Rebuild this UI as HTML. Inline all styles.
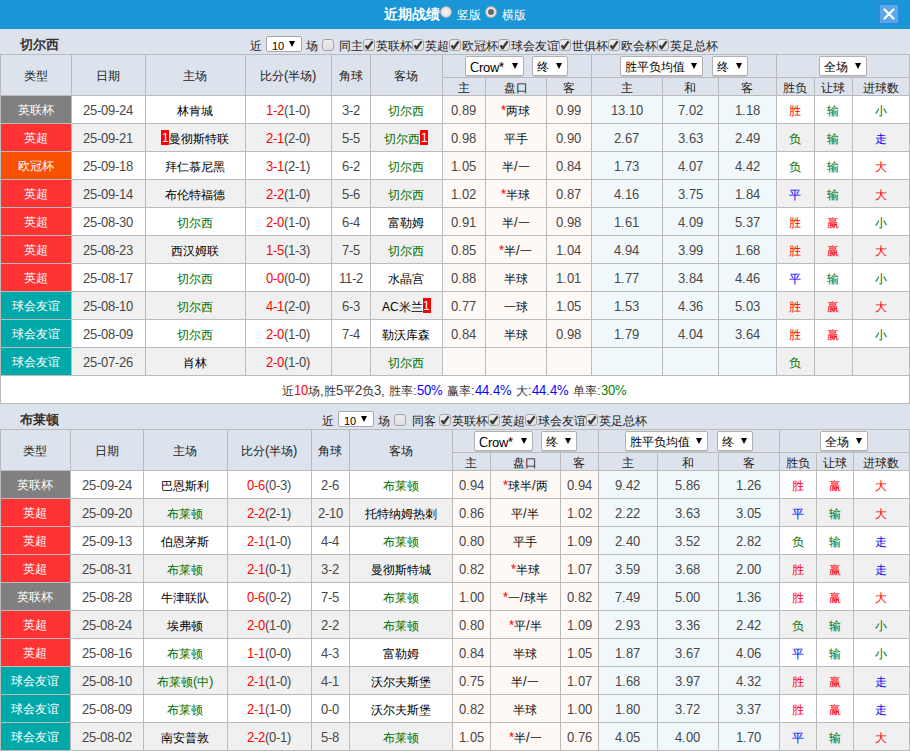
<!DOCTYPE html><html><head><meta charset="utf-8"><style>
@font-face{font-family:"LS";src:local("Liberation Sans");unicode-range:U+0000-024F;size-adjust:106%}
*{margin:0;padding:0;box-sizing:border-box}
html,body{width:910px;height:751px;overflow:hidden;background:#fff}
body{position:relative;font-family:"LS","Liberation Sans",sans-serif;font-size:12px;color:#333}
.c,.b{position:absolute;text-align:center;white-space:nowrap;overflow:hidden}
.c{padding-right:1px}
.title{position:absolute;left:0;top:0;width:910px;height:29px;background:#1a96d6}
.tname{position:absolute;height:25px;line-height:31px;font-weight:bold;font-size:13px;color:#333}
.tt{position:absolute;height:25px;line-height:34px;white-space:nowrap;color:#222}
.nsel{position:absolute;width:36px;height:16px;background:#fff;border:1px solid #a8a8a8;border-radius:2px;line-height:17px;text-align:left;padding-left:5px;color:#000}
.nsel span{font-size:10.5px}
.ar2{position:absolute;left:22px;top:4px;width:0;height:0;border-left:3px solid transparent;border-right:3px solid transparent;border-top:6px solid #000}
.cb{position:absolute;width:12px;height:12px;border:1px solid #a4a4a4;border-radius:3px;background:linear-gradient(#ececec,#e0e0e0)}
.cb svg{left:-1px!important;top:-1px!important}
.lg{}
.sel{position:absolute;height:20px;background:#fff;border:1px solid #b0b0b0;border-radius:2px;box-shadow:0 1px 0 #c8c8c8;text-align:left;padding-left:4px;line-height:22px;color:#000;white-space:nowrap}
.sel .ar{position:absolute;right:5px;top:6px;width:0;height:0;border-left:3px solid transparent;border-right:3px solid transparent;border-top:6px solid #000}
.rc{display:inline-block;font-style:normal;background:#f00;color:#fff;width:8px;height:15px;line-height:15px;font-size:11px;font-weight:normal;text-align:center;vertical-align:middle;margin-top:-2px;position:relative;top:-1px}
</style></head><body><div class="title"></div>
<div style="position:absolute;left:384px;top:0;height:29px;line-height:29px;color:#fff;font-weight:bold;font-size:14px;white-space:nowrap">近期战绩</div>
<div style="position:absolute;left:440px;top:6px;width:12px;height:12px;border-radius:50%;background:radial-gradient(#f4f4f4,#dcdcdc);border:1px solid #a8a8a8"></div>
<div style="position:absolute;left:457px;top:0;height:29px;line-height:29px;color:#fff;font-size:12px">竖版</div>
<div style="position:absolute;left:485px;top:6px;width:12px;height:12px;border-radius:50%;background:#e8e8e8;border:1px solid #a8a8a8"><div style="position:absolute;left:2px;top:2px;width:6px;height:6px;border-radius:50%;background:#666"></div></div>
<div style="position:absolute;left:502px;top:0;height:29px;line-height:29px;color:#fff;font-size:12px">横版</div>
<div style="position:absolute;left:878px;top:3px;width:22px;height:22px;background:#5aa6e8;border:2px solid #2a8ce0"><svg width="18" height="18" style="position:absolute;left:0;top:0"><path d="M4.5 4.5L13.5 13.5M13.5 4.5L4.5 13.5" stroke="#fff" stroke-width="2.2" stroke-linecap="round"/></svg></div>
<div class="b" style="left:0px;top:29px;width:910px;height:25px;line-height:25px;background:#dde3ec"></div>
<div class="tname" style="left:20px;top:29px">切尔西</div>
<div class="tt" style="left:250px;top:29px">近</div>
<div class="nsel" style="left:266px;top:36px"><span>10</span><i class="ar2"></i></div>
<div class="tt" style="left:306px;top:29px">场</div>
<div class="cb" style="left:322px;top:39px"></div>
<div class="tt" style="left:339px;top:29px">同主</div>
<div class="cb" style="left:363px;top:39px"><svg width="12" height="12" style="position:absolute;left:0;top:0"><path d="M2.6 6.4L4.6 9.2L9.6 2.4" stroke="#3a3a3a" stroke-width="2.4" fill="none" stroke-linejoin="round"/></svg></div>
<div class="tt" style="left:376px;top:29px">英联杯</div>
<div class="cb" style="left:412px;top:39px"><svg width="12" height="12" style="position:absolute;left:0;top:0"><path d="M2.6 6.4L4.6 9.2L9.6 2.4" stroke="#3a3a3a" stroke-width="2.4" fill="none" stroke-linejoin="round"/></svg></div>
<div class="tt" style="left:425px;top:29px">英超</div>
<div class="cb" style="left:449px;top:39px"><svg width="12" height="12" style="position:absolute;left:0;top:0"><path d="M2.6 6.4L4.6 9.2L9.6 2.4" stroke="#3a3a3a" stroke-width="2.4" fill="none" stroke-linejoin="round"/></svg></div>
<div class="tt" style="left:462px;top:29px">欧冠杯</div>
<div class="cb" style="left:498px;top:39px"><svg width="12" height="12" style="position:absolute;left:0;top:0"><path d="M2.6 6.4L4.6 9.2L9.6 2.4" stroke="#3a3a3a" stroke-width="2.4" fill="none" stroke-linejoin="round"/></svg></div>
<div class="tt" style="left:511px;top:29px">球会友谊</div>
<div class="cb" style="left:559px;top:39px"><svg width="12" height="12" style="position:absolute;left:0;top:0"><path d="M2.6 6.4L4.6 9.2L9.6 2.4" stroke="#3a3a3a" stroke-width="2.4" fill="none" stroke-linejoin="round"/></svg></div>
<div class="tt" style="left:572px;top:29px">世俱杯</div>
<div class="cb" style="left:608px;top:39px"><svg width="12" height="12" style="position:absolute;left:0;top:0"><path d="M2.6 6.4L4.6 9.2L9.6 2.4" stroke="#3a3a3a" stroke-width="2.4" fill="none" stroke-linejoin="round"/></svg></div>
<div class="tt" style="left:621px;top:29px">欧会杯</div>
<div class="cb" style="left:657px;top:39px"><svg width="12" height="12" style="position:absolute;left:0;top:0"><path d="M2.6 6.4L4.6 9.2L9.6 2.4" stroke="#3a3a3a" stroke-width="2.4" fill="none" stroke-linejoin="round"/></svg></div>
<div class="tt" style="left:670px;top:29px">英足总杯</div>
<div class="b" style="left:0px;top:54px;width:910px;height:350px;line-height:350px;background:#bbbbbb"></div>
<div class="c" style="left:1px;top:55px;width:70px;height:40px;line-height:42px;background:#dde3ec;color:#222">类型</div>
<div class="c" style="left:72px;top:55px;width:73px;height:40px;line-height:42px;background:#dde3ec;color:#222">日期</div>
<div class="c" style="left:146px;top:55px;width:99px;height:40px;line-height:42px;background:#dde3ec;color:#222">主场</div>
<div class="c" style="left:246px;top:55px;width:85px;height:40px;line-height:42px;background:#dde3ec;color:#222">比分(半场)</div>
<div class="c" style="left:332px;top:55px;width:38px;height:40px;line-height:42px;background:#dde3ec;color:#222">角球</div>
<div class="c" style="left:371px;top:55px;width:71px;height:40px;line-height:42px;background:#dde3ec;color:#222">客场</div>
<div class="c" style="left:443px;top:55px;width:148px;height:22px;line-height:22px;background:#dde3ec"></div>
<div class="c" style="left:592px;top:55px;width:184px;height:22px;line-height:22px;background:#dde3ec"></div>
<div class="c" style="left:777px;top:55px;width:132px;height:22px;line-height:22px;background:#dde3ec"></div>
<div class="c" style="left:443px;top:78px;width:42px;height:17px;line-height:20px;background:#dde3ec;color:#222">主</div>
<div class="c" style="left:486px;top:78px;width:60px;height:17px;line-height:20px;background:#dde3ec;color:#222">盘口</div>
<div class="c" style="left:547px;top:78px;width:44px;height:17px;line-height:20px;background:#dde3ec;color:#222">客</div>
<div class="c" style="left:592px;top:78px;width:70px;height:17px;line-height:20px;background:#dde3ec;color:#222">主</div>
<div class="c" style="left:663px;top:78px;width:55px;height:17px;line-height:20px;background:#dde3ec;color:#222">和</div>
<div class="c" style="left:719px;top:78px;width:57px;height:17px;line-height:20px;background:#dde3ec;color:#222">客</div>
<div class="c" style="left:777px;top:78px;width:37px;height:17px;line-height:20px;background:#dde3ec;color:#222">胜负</div>
<div class="c" style="left:815px;top:78px;width:37px;height:17px;line-height:20px;background:#dde3ec;color:#222">让球</div>
<div class="c" style="left:853px;top:78px;width:56px;height:17px;line-height:20px;background:#dde3ec;color:#222">进球数</div>
<div class="sel" style="left:465px;top:56px;width:59px;"><span class="st" style="font-size:12.5px">Crow*</span><span class="ar"></span></div>
<div class="sel" style="left:532px;top:56px;width:36px;"><span class="st" style="line-height:20px;display:inline-block;vertical-align:top">终</span><span class="ar"></span></div>
<div class="sel" style="left:620px;top:56px;width:83px;"><span class="st" style="line-height:20px;display:inline-block;vertical-align:top">胜平负均值</span><span class="ar"></span></div>
<div class="sel" style="left:712px;top:56px;width:36px;"><span class="st" style="line-height:20px;display:inline-block;vertical-align:top">终</span><span class="ar"></span></div>
<div class="sel" style="left:819px;top:56px;width:48px;"><span class="st" style="line-height:20px;display:inline-block;vertical-align:top">全场</span><span class="ar"></span></div>
<div class="c" style="left:1px;top:96px;width:70px;height:27px;line-height:27px;background:#808080;color:#fff">英联杯</div>
<div class="c" style="left:72px;top:96px;width:73px;height:27px;line-height:29px;background:#fff;color:#474747">25-09-24</div>
<div class="c" style="left:146px;top:96px;width:99px;height:27px;line-height:29px;background:#fff"><span style="color:#000">林肯城</span></div>
<div class="c" style="left:246px;top:96px;width:85px;height:27px;line-height:29px;background:#fff"><span style="color:#ff0000">1-2</span><span style="color:#474747">(1-0)</span></div>
<div class="c" style="left:332px;top:96px;width:38px;height:27px;line-height:29px;background:#fff;color:#474747">3-2</div>
<div class="c" style="left:371px;top:96px;width:71px;height:27px;line-height:29px;background:#fff"><span style="color:#007000">切尔西</span></div>
<div class="c" style="left:443px;top:96px;width:42px;height:27px;line-height:29px;background:#fff9f5;color:#474747">0.89</div>
<div class="c" style="left:486px;top:96px;width:60px;height:27px;line-height:29px;background:#fff9f5;color:#111"><span style="color:#ff0000">*</span>两球</div>
<div class="c" style="left:547px;top:96px;width:44px;height:27px;line-height:29px;background:#fff9f5;color:#474747">0.99</div>
<div class="c" style="left:592px;top:96px;width:70px;height:27px;line-height:29px;background:#f0f8fc;color:#474747">13.10</div>
<div class="c" style="left:663px;top:96px;width:55px;height:27px;line-height:29px;background:#f0f8fc;color:#474747">7.02</div>
<div class="c" style="left:719px;top:96px;width:57px;height:27px;line-height:29px;background:#f0f8fc;color:#474747">1.18</div>
<div class="c" style="left:777px;top:96px;width:37px;height:27px;line-height:29px;background:#fff;color:#ff0000">胜</div>
<div class="c" style="left:815px;top:96px;width:37px;height:27px;line-height:29px;background:#fff;color:#007000">输</div>
<div class="c" style="left:853px;top:96px;width:56px;height:27px;line-height:29px;background:#fff;color:#007000">小</div>
<div class="c" style="left:1px;top:124px;width:70px;height:27px;line-height:27px;background:#ff3333;color:#fff">英超</div>
<div class="c" style="left:72px;top:124px;width:73px;height:27px;line-height:29px;background:#f0f0f0;color:#474747">25-09-21</div>
<div class="c" style="left:146px;top:124px;width:99px;height:27px;line-height:29px;background:#f0f0f0"><span style="color:#000"><i class="rc">1</i>曼彻斯特联</span></div>
<div class="c" style="left:246px;top:124px;width:85px;height:27px;line-height:29px;background:#f0f0f0"><span style="color:#ff0000">2-1</span><span style="color:#474747">(2-0)</span></div>
<div class="c" style="left:332px;top:124px;width:38px;height:27px;line-height:29px;background:#f0f0f0;color:#474747">5-5</div>
<div class="c" style="left:371px;top:124px;width:71px;height:27px;line-height:29px;background:#f0f0f0"><span style="color:#007000">切尔西<i class="rc">1</i></span></div>
<div class="c" style="left:443px;top:124px;width:42px;height:27px;line-height:29px;background:#fff9f5;color:#474747">0.98</div>
<div class="c" style="left:486px;top:124px;width:60px;height:27px;line-height:29px;background:#fff9f5;color:#111">平手</div>
<div class="c" style="left:547px;top:124px;width:44px;height:27px;line-height:29px;background:#fff9f5;color:#474747">0.90</div>
<div class="c" style="left:592px;top:124px;width:70px;height:27px;line-height:29px;background:#f0f8fc;color:#474747">2.67</div>
<div class="c" style="left:663px;top:124px;width:55px;height:27px;line-height:29px;background:#f0f8fc;color:#474747">3.63</div>
<div class="c" style="left:719px;top:124px;width:57px;height:27px;line-height:29px;background:#f0f8fc;color:#474747">2.49</div>
<div class="c" style="left:777px;top:124px;width:37px;height:27px;line-height:29px;background:#f0f0f0;color:#007000">负</div>
<div class="c" style="left:815px;top:124px;width:37px;height:27px;line-height:29px;background:#f0f0f0;color:#007000">输</div>
<div class="c" style="left:853px;top:124px;width:56px;height:27px;line-height:29px;background:#f0f0f0;color:#0000ff">走</div>
<div class="c" style="left:1px;top:152px;width:70px;height:27px;line-height:27px;background:#f75000;color:#fff">欧冠杯</div>
<div class="c" style="left:72px;top:152px;width:73px;height:27px;line-height:29px;background:#fff;color:#474747">25-09-18</div>
<div class="c" style="left:146px;top:152px;width:99px;height:27px;line-height:29px;background:#fff"><span style="color:#000">拜仁慕尼黑</span></div>
<div class="c" style="left:246px;top:152px;width:85px;height:27px;line-height:29px;background:#fff"><span style="color:#ff0000">3-1</span><span style="color:#474747">(2-1)</span></div>
<div class="c" style="left:332px;top:152px;width:38px;height:27px;line-height:29px;background:#fff;color:#474747">6-2</div>
<div class="c" style="left:371px;top:152px;width:71px;height:27px;line-height:29px;background:#fff"><span style="color:#007000">切尔西</span></div>
<div class="c" style="left:443px;top:152px;width:42px;height:27px;line-height:29px;background:#fff9f5;color:#474747">1.05</div>
<div class="c" style="left:486px;top:152px;width:60px;height:27px;line-height:29px;background:#fff9f5;color:#111">半/一</div>
<div class="c" style="left:547px;top:152px;width:44px;height:27px;line-height:29px;background:#fff9f5;color:#474747">0.84</div>
<div class="c" style="left:592px;top:152px;width:70px;height:27px;line-height:29px;background:#f0f8fc;color:#474747">1.73</div>
<div class="c" style="left:663px;top:152px;width:55px;height:27px;line-height:29px;background:#f0f8fc;color:#474747">4.07</div>
<div class="c" style="left:719px;top:152px;width:57px;height:27px;line-height:29px;background:#f0f8fc;color:#474747">4.42</div>
<div class="c" style="left:777px;top:152px;width:37px;height:27px;line-height:29px;background:#fff;color:#007000">负</div>
<div class="c" style="left:815px;top:152px;width:37px;height:27px;line-height:29px;background:#fff;color:#007000">输</div>
<div class="c" style="left:853px;top:152px;width:56px;height:27px;line-height:29px;background:#fff;color:#ff0000">大</div>
<div class="c" style="left:1px;top:180px;width:70px;height:27px;line-height:27px;background:#ff3333;color:#fff">英超</div>
<div class="c" style="left:72px;top:180px;width:73px;height:27px;line-height:29px;background:#f0f0f0;color:#474747">25-09-14</div>
<div class="c" style="left:146px;top:180px;width:99px;height:27px;line-height:29px;background:#f0f0f0"><span style="color:#000">布伦特福德</span></div>
<div class="c" style="left:246px;top:180px;width:85px;height:27px;line-height:29px;background:#f0f0f0"><span style="color:#ff0000">2-2</span><span style="color:#474747">(1-0)</span></div>
<div class="c" style="left:332px;top:180px;width:38px;height:27px;line-height:29px;background:#f0f0f0;color:#474747">5-6</div>
<div class="c" style="left:371px;top:180px;width:71px;height:27px;line-height:29px;background:#f0f0f0"><span style="color:#007000">切尔西</span></div>
<div class="c" style="left:443px;top:180px;width:42px;height:27px;line-height:29px;background:#fff9f5;color:#474747">1.02</div>
<div class="c" style="left:486px;top:180px;width:60px;height:27px;line-height:29px;background:#fff9f5;color:#111"><span style="color:#ff0000">*</span>半球</div>
<div class="c" style="left:547px;top:180px;width:44px;height:27px;line-height:29px;background:#fff9f5;color:#474747">0.87</div>
<div class="c" style="left:592px;top:180px;width:70px;height:27px;line-height:29px;background:#f0f8fc;color:#474747">4.16</div>
<div class="c" style="left:663px;top:180px;width:55px;height:27px;line-height:29px;background:#f0f8fc;color:#474747">3.75</div>
<div class="c" style="left:719px;top:180px;width:57px;height:27px;line-height:29px;background:#f0f8fc;color:#474747">1.84</div>
<div class="c" style="left:777px;top:180px;width:37px;height:27px;line-height:29px;background:#f0f0f0;color:#0000ff">平</div>
<div class="c" style="left:815px;top:180px;width:37px;height:27px;line-height:29px;background:#f0f0f0;color:#007000">输</div>
<div class="c" style="left:853px;top:180px;width:56px;height:27px;line-height:29px;background:#f0f0f0;color:#ff0000">大</div>
<div class="c" style="left:1px;top:208px;width:70px;height:27px;line-height:27px;background:#ff3333;color:#fff">英超</div>
<div class="c" style="left:72px;top:208px;width:73px;height:27px;line-height:29px;background:#fff;color:#474747">25-08-30</div>
<div class="c" style="left:146px;top:208px;width:99px;height:27px;line-height:29px;background:#fff"><span style="color:#007000">切尔西</span></div>
<div class="c" style="left:246px;top:208px;width:85px;height:27px;line-height:29px;background:#fff"><span style="color:#ff0000">2-0</span><span style="color:#474747">(1-0)</span></div>
<div class="c" style="left:332px;top:208px;width:38px;height:27px;line-height:29px;background:#fff;color:#474747">6-4</div>
<div class="c" style="left:371px;top:208px;width:71px;height:27px;line-height:29px;background:#fff"><span style="color:#000">富勒姆</span></div>
<div class="c" style="left:443px;top:208px;width:42px;height:27px;line-height:29px;background:#fff9f5;color:#474747">0.91</div>
<div class="c" style="left:486px;top:208px;width:60px;height:27px;line-height:29px;background:#fff9f5;color:#111">半/一</div>
<div class="c" style="left:547px;top:208px;width:44px;height:27px;line-height:29px;background:#fff9f5;color:#474747">0.98</div>
<div class="c" style="left:592px;top:208px;width:70px;height:27px;line-height:29px;background:#f0f8fc;color:#474747">1.61</div>
<div class="c" style="left:663px;top:208px;width:55px;height:27px;line-height:29px;background:#f0f8fc;color:#474747">4.09</div>
<div class="c" style="left:719px;top:208px;width:57px;height:27px;line-height:29px;background:#f0f8fc;color:#474747">5.37</div>
<div class="c" style="left:777px;top:208px;width:37px;height:27px;line-height:29px;background:#fff;color:#ff0000">胜</div>
<div class="c" style="left:815px;top:208px;width:37px;height:27px;line-height:29px;background:#fff;color:#ff0000">赢</div>
<div class="c" style="left:853px;top:208px;width:56px;height:27px;line-height:29px;background:#fff;color:#007000">小</div>
<div class="c" style="left:1px;top:236px;width:70px;height:27px;line-height:27px;background:#ff3333;color:#fff">英超</div>
<div class="c" style="left:72px;top:236px;width:73px;height:27px;line-height:29px;background:#f0f0f0;color:#474747">25-08-23</div>
<div class="c" style="left:146px;top:236px;width:99px;height:27px;line-height:29px;background:#f0f0f0"><span style="color:#000">西汉姆联</span></div>
<div class="c" style="left:246px;top:236px;width:85px;height:27px;line-height:29px;background:#f0f0f0"><span style="color:#ff0000">1-5</span><span style="color:#474747">(1-3)</span></div>
<div class="c" style="left:332px;top:236px;width:38px;height:27px;line-height:29px;background:#f0f0f0;color:#474747">7-5</div>
<div class="c" style="left:371px;top:236px;width:71px;height:27px;line-height:29px;background:#f0f0f0"><span style="color:#007000">切尔西</span></div>
<div class="c" style="left:443px;top:236px;width:42px;height:27px;line-height:29px;background:#fff9f5;color:#474747">0.85</div>
<div class="c" style="left:486px;top:236px;width:60px;height:27px;line-height:29px;background:#fff9f5;color:#111"><span style="color:#ff0000">*</span>半/一</div>
<div class="c" style="left:547px;top:236px;width:44px;height:27px;line-height:29px;background:#fff9f5;color:#474747">1.04</div>
<div class="c" style="left:592px;top:236px;width:70px;height:27px;line-height:29px;background:#f0f8fc;color:#474747">4.94</div>
<div class="c" style="left:663px;top:236px;width:55px;height:27px;line-height:29px;background:#f0f8fc;color:#474747">3.99</div>
<div class="c" style="left:719px;top:236px;width:57px;height:27px;line-height:29px;background:#f0f8fc;color:#474747">1.68</div>
<div class="c" style="left:777px;top:236px;width:37px;height:27px;line-height:29px;background:#f0f0f0;color:#ff0000">胜</div>
<div class="c" style="left:815px;top:236px;width:37px;height:27px;line-height:29px;background:#f0f0f0;color:#ff0000">赢</div>
<div class="c" style="left:853px;top:236px;width:56px;height:27px;line-height:29px;background:#f0f0f0;color:#ff0000">大</div>
<div class="c" style="left:1px;top:264px;width:70px;height:27px;line-height:27px;background:#ff3333;color:#fff">英超</div>
<div class="c" style="left:72px;top:264px;width:73px;height:27px;line-height:29px;background:#fff;color:#474747">25-08-17</div>
<div class="c" style="left:146px;top:264px;width:99px;height:27px;line-height:29px;background:#fff"><span style="color:#007000">切尔西</span></div>
<div class="c" style="left:246px;top:264px;width:85px;height:27px;line-height:29px;background:#fff"><span style="color:#ff0000">0-0</span><span style="color:#474747">(0-0)</span></div>
<div class="c" style="left:332px;top:264px;width:38px;height:27px;line-height:29px;background:#fff;color:#474747">11-2</div>
<div class="c" style="left:371px;top:264px;width:71px;height:27px;line-height:29px;background:#fff"><span style="color:#000">水晶宫</span></div>
<div class="c" style="left:443px;top:264px;width:42px;height:27px;line-height:29px;background:#fff9f5;color:#474747">0.88</div>
<div class="c" style="left:486px;top:264px;width:60px;height:27px;line-height:29px;background:#fff9f5;color:#111">半球</div>
<div class="c" style="left:547px;top:264px;width:44px;height:27px;line-height:29px;background:#fff9f5;color:#474747">1.01</div>
<div class="c" style="left:592px;top:264px;width:70px;height:27px;line-height:29px;background:#f0f8fc;color:#474747">1.77</div>
<div class="c" style="left:663px;top:264px;width:55px;height:27px;line-height:29px;background:#f0f8fc;color:#474747">3.84</div>
<div class="c" style="left:719px;top:264px;width:57px;height:27px;line-height:29px;background:#f0f8fc;color:#474747">4.46</div>
<div class="c" style="left:777px;top:264px;width:37px;height:27px;line-height:29px;background:#fff;color:#0000ff">平</div>
<div class="c" style="left:815px;top:264px;width:37px;height:27px;line-height:29px;background:#fff;color:#007000">输</div>
<div class="c" style="left:853px;top:264px;width:56px;height:27px;line-height:29px;background:#fff;color:#007000">小</div>
<div class="c" style="left:1px;top:292px;width:70px;height:27px;line-height:27px;background:#00a9a9;color:#fff">球会友谊</div>
<div class="c" style="left:72px;top:292px;width:73px;height:27px;line-height:29px;background:#f0f0f0;color:#474747">25-08-10</div>
<div class="c" style="left:146px;top:292px;width:99px;height:27px;line-height:29px;background:#f0f0f0"><span style="color:#007000">切尔西</span></div>
<div class="c" style="left:246px;top:292px;width:85px;height:27px;line-height:29px;background:#f0f0f0"><span style="color:#ff0000">4-1</span><span style="color:#474747">(2-0)</span></div>
<div class="c" style="left:332px;top:292px;width:38px;height:27px;line-height:29px;background:#f0f0f0;color:#474747">6-3</div>
<div class="c" style="left:371px;top:292px;width:71px;height:27px;line-height:29px;background:#f0f0f0"><span style="color:#000"><span style="font-size:11px">AC</span>米兰<i class="rc">1</i></span></div>
<div class="c" style="left:443px;top:292px;width:42px;height:27px;line-height:29px;background:#fff9f5;color:#474747">0.77</div>
<div class="c" style="left:486px;top:292px;width:60px;height:27px;line-height:29px;background:#fff9f5;color:#111">一球</div>
<div class="c" style="left:547px;top:292px;width:44px;height:27px;line-height:29px;background:#fff9f5;color:#474747">1.05</div>
<div class="c" style="left:592px;top:292px;width:70px;height:27px;line-height:29px;background:#f0f8fc;color:#474747">1.53</div>
<div class="c" style="left:663px;top:292px;width:55px;height:27px;line-height:29px;background:#f0f8fc;color:#474747">4.36</div>
<div class="c" style="left:719px;top:292px;width:57px;height:27px;line-height:29px;background:#f0f8fc;color:#474747">5.03</div>
<div class="c" style="left:777px;top:292px;width:37px;height:27px;line-height:29px;background:#f0f0f0;color:#ff0000">胜</div>
<div class="c" style="left:815px;top:292px;width:37px;height:27px;line-height:29px;background:#f0f0f0;color:#ff0000">赢</div>
<div class="c" style="left:853px;top:292px;width:56px;height:27px;line-height:29px;background:#f0f0f0;color:#ff0000">大</div>
<div class="c" style="left:1px;top:320px;width:70px;height:27px;line-height:27px;background:#00a9a9;color:#fff">球会友谊</div>
<div class="c" style="left:72px;top:320px;width:73px;height:27px;line-height:29px;background:#fff;color:#474747">25-08-09</div>
<div class="c" style="left:146px;top:320px;width:99px;height:27px;line-height:29px;background:#fff"><span style="color:#007000">切尔西</span></div>
<div class="c" style="left:246px;top:320px;width:85px;height:27px;line-height:29px;background:#fff"><span style="color:#ff0000">2-0</span><span style="color:#474747">(1-0)</span></div>
<div class="c" style="left:332px;top:320px;width:38px;height:27px;line-height:29px;background:#fff;color:#474747">7-4</div>
<div class="c" style="left:371px;top:320px;width:71px;height:27px;line-height:29px;background:#fff"><span style="color:#000">勒沃库森</span></div>
<div class="c" style="left:443px;top:320px;width:42px;height:27px;line-height:29px;background:#fff9f5;color:#474747">0.84</div>
<div class="c" style="left:486px;top:320px;width:60px;height:27px;line-height:29px;background:#fff9f5;color:#111">半球</div>
<div class="c" style="left:547px;top:320px;width:44px;height:27px;line-height:29px;background:#fff9f5;color:#474747">0.98</div>
<div class="c" style="left:592px;top:320px;width:70px;height:27px;line-height:29px;background:#f0f8fc;color:#474747">1.79</div>
<div class="c" style="left:663px;top:320px;width:55px;height:27px;line-height:29px;background:#f0f8fc;color:#474747">4.04</div>
<div class="c" style="left:719px;top:320px;width:57px;height:27px;line-height:29px;background:#f0f8fc;color:#474747">3.64</div>
<div class="c" style="left:777px;top:320px;width:37px;height:27px;line-height:29px;background:#fff;color:#ff0000">胜</div>
<div class="c" style="left:815px;top:320px;width:37px;height:27px;line-height:29px;background:#fff;color:#ff0000">赢</div>
<div class="c" style="left:853px;top:320px;width:56px;height:27px;line-height:29px;background:#fff;color:#007000">小</div>
<div class="c" style="left:1px;top:348px;width:70px;height:27px;line-height:27px;background:#00a9a9;color:#fff">球会友谊</div>
<div class="c" style="left:72px;top:348px;width:73px;height:27px;line-height:29px;background:#f0f0f0;color:#474747">25-07-26</div>
<div class="c" style="left:146px;top:348px;width:99px;height:27px;line-height:29px;background:#f0f0f0"><span style="color:#000">肖林</span></div>
<div class="c" style="left:246px;top:348px;width:85px;height:27px;line-height:29px;background:#f0f0f0"><span style="color:#ff0000">2-0</span><span style="color:#474747">(1-0)</span></div>
<div class="c" style="left:332px;top:348px;width:38px;height:27px;line-height:29px;background:#f0f0f0;color:#474747"></div>
<div class="c" style="left:371px;top:348px;width:71px;height:27px;line-height:29px;background:#f0f0f0"><span style="color:#007000">切尔西</span></div>
<div class="c" style="left:443px;top:348px;width:42px;height:27px;line-height:29px;background:#fff9f5;color:#474747"></div>
<div class="c" style="left:486px;top:348px;width:60px;height:27px;line-height:29px;background:#fff9f5;color:#111"></div>
<div class="c" style="left:547px;top:348px;width:44px;height:27px;line-height:29px;background:#fff9f5;color:#474747"></div>
<div class="c" style="left:592px;top:348px;width:70px;height:27px;line-height:29px;background:#f0f8fc;color:#474747"></div>
<div class="c" style="left:663px;top:348px;width:55px;height:27px;line-height:29px;background:#f0f8fc;color:#474747"></div>
<div class="c" style="left:719px;top:348px;width:57px;height:27px;line-height:29px;background:#f0f8fc;color:#474747"></div>
<div class="c" style="left:777px;top:348px;width:37px;height:27px;line-height:29px;background:#f0f0f0;color:#007000">负</div>
<div class="c" style="left:815px;top:348px;width:37px;height:27px;line-height:29px;background:#f0f0f0;color:#333"></div>
<div class="c" style="left:853px;top:348px;width:56px;height:27px;line-height:29px;background:#f0f0f0;color:#333"></div>
<div class="c" style="left:1px;top:376px;width:908px;height:27px;line-height:29px;background:#fff;color:#333">近<span style="color:#f00">10</span>场,胜5平2负3, 胜率:<span style="color:#00f">50%</span> 赢率:<span style="color:#00f">44.4%</span> 大:<span style="color:#00f">44.4%</span> 单率:<span style="color:#008000">30%</span></div>
<div class="b" style="left:0px;top:404px;width:910px;height:25px;line-height:25px;background:#dde3ec"></div>
<div class="tname" style="left:20px;top:404px">布莱顿</div>
<div class="tt" style="left:322px;top:404px">近</div>
<div class="nsel" style="left:338px;top:411px"><span>10</span><i class="ar2"></i></div>
<div class="tt" style="left:378px;top:404px">场</div>
<div class="cb" style="left:394px;top:414px"></div>
<div class="tt" style="left:412px;top:404px">同客</div>
<div class="cb" style="left:439px;top:414px"><svg width="12" height="12" style="position:absolute;left:0;top:0"><path d="M2.6 6.4L4.6 9.2L9.6 2.4" stroke="#3a3a3a" stroke-width="2.4" fill="none" stroke-linejoin="round"/></svg></div>
<div class="tt" style="left:452px;top:404px">英联杯</div>
<div class="cb" style="left:488px;top:414px"><svg width="12" height="12" style="position:absolute;left:0;top:0"><path d="M2.6 6.4L4.6 9.2L9.6 2.4" stroke="#3a3a3a" stroke-width="2.4" fill="none" stroke-linejoin="round"/></svg></div>
<div class="tt" style="left:501px;top:404px">英超</div>
<div class="cb" style="left:525px;top:414px"><svg width="12" height="12" style="position:absolute;left:0;top:0"><path d="M2.6 6.4L4.6 9.2L9.6 2.4" stroke="#3a3a3a" stroke-width="2.4" fill="none" stroke-linejoin="round"/></svg></div>
<div class="tt" style="left:538px;top:404px">球会友谊</div>
<div class="cb" style="left:586px;top:414px"><svg width="12" height="12" style="position:absolute;left:0;top:0"><path d="M2.6 6.4L4.6 9.2L9.6 2.4" stroke="#3a3a3a" stroke-width="2.4" fill="none" stroke-linejoin="round"/></svg></div>
<div class="tt" style="left:599px;top:404px">英足总杯</div>
<div class="b" style="left:0px;top:429px;width:910px;height:322px;line-height:322px;background:#bbbbbb"></div>
<div class="c" style="left:1px;top:430px;width:69px;height:40px;line-height:42px;background:#dde3ec;color:#222">类型</div>
<div class="c" style="left:71px;top:430px;width:72px;height:40px;line-height:42px;background:#dde3ec;color:#222">日期</div>
<div class="c" style="left:144px;top:430px;width:83px;height:40px;line-height:42px;background:#dde3ec;color:#222">主场</div>
<div class="c" style="left:228px;top:430px;width:83px;height:40px;line-height:42px;background:#dde3ec;color:#222">比分(半场)</div>
<div class="c" style="left:312px;top:430px;width:37px;height:40px;line-height:42px;background:#dde3ec;color:#222">角球</div>
<div class="c" style="left:350px;top:430px;width:102px;height:40px;line-height:42px;background:#dde3ec;color:#222">客场</div>
<div class="c" style="left:453px;top:430px;width:145px;height:22px;line-height:22px;background:#dde3ec"></div>
<div class="c" style="left:599px;top:430px;width:180px;height:22px;line-height:22px;background:#dde3ec"></div>
<div class="c" style="left:780px;top:430px;width:129px;height:22px;line-height:22px;background:#dde3ec"></div>
<div class="c" style="left:453px;top:453px;width:37px;height:17px;line-height:20px;background:#dde3ec;color:#222">主</div>
<div class="c" style="left:491px;top:453px;width:69px;height:17px;line-height:20px;background:#dde3ec;color:#222">盘口</div>
<div class="c" style="left:561px;top:453px;width:37px;height:17px;line-height:20px;background:#dde3ec;color:#222">客</div>
<div class="c" style="left:599px;top:453px;width:58px;height:17px;line-height:20px;background:#dde3ec;color:#222">主</div>
<div class="c" style="left:658px;top:453px;width:60px;height:17px;line-height:20px;background:#dde3ec;color:#222">和</div>
<div class="c" style="left:719px;top:453px;width:60px;height:17px;line-height:20px;background:#dde3ec;color:#222">客</div>
<div class="c" style="left:780px;top:453px;width:36px;height:17px;line-height:20px;background:#dde3ec;color:#222">胜负</div>
<div class="c" style="left:817px;top:453px;width:36px;height:17px;line-height:20px;background:#dde3ec;color:#222">让球</div>
<div class="c" style="left:854px;top:453px;width:55px;height:17px;line-height:20px;background:#dde3ec;color:#222">进球数</div>
<div class="sel" style="left:474px;top:431px;width:59px;"><span class="st" style="font-size:12.5px">Crow*</span><span class="ar"></span></div>
<div class="sel" style="left:541px;top:431px;width:36px;"><span class="st" style="line-height:20px;display:inline-block;vertical-align:top">终</span><span class="ar"></span></div>
<div class="sel" style="left:625px;top:431px;width:83px;"><span class="st" style="line-height:20px;display:inline-block;vertical-align:top">胜平负均值</span><span class="ar"></span></div>
<div class="sel" style="left:717px;top:431px;width:36px;"><span class="st" style="line-height:20px;display:inline-block;vertical-align:top">终</span><span class="ar"></span></div>
<div class="sel" style="left:820px;top:431px;width:48px;"><span class="st" style="line-height:20px;display:inline-block;vertical-align:top">全场</span><span class="ar"></span></div>
<div class="c" style="left:1px;top:471px;width:69px;height:27px;line-height:27px;background:#808080;color:#fff">英联杯</div>
<div class="c" style="left:71px;top:471px;width:72px;height:27px;line-height:29px;background:#fff;color:#474747">25-09-24</div>
<div class="c" style="left:144px;top:471px;width:83px;height:27px;line-height:29px;background:#fff"><span style="color:#000">巴恩斯利</span></div>
<div class="c" style="left:228px;top:471px;width:83px;height:27px;line-height:29px;background:#fff"><span style="color:#ff0000">0-6</span><span style="color:#474747">(0-3)</span></div>
<div class="c" style="left:312px;top:471px;width:37px;height:27px;line-height:29px;background:#fff;color:#474747">2-6</div>
<div class="c" style="left:350px;top:471px;width:102px;height:27px;line-height:29px;background:#fff"><span style="color:#007000">布莱顿</span></div>
<div class="c" style="left:453px;top:471px;width:37px;height:27px;line-height:29px;background:#fff9f5;color:#474747">0.94</div>
<div class="c" style="left:491px;top:471px;width:69px;height:27px;line-height:29px;background:#fff9f5;color:#111"><span style="color:#ff0000">*</span>球半/两</div>
<div class="c" style="left:561px;top:471px;width:37px;height:27px;line-height:29px;background:#fff9f5;color:#474747">0.94</div>
<div class="c" style="left:599px;top:471px;width:58px;height:27px;line-height:29px;background:#f0f8fc;color:#474747">9.42</div>
<div class="c" style="left:658px;top:471px;width:60px;height:27px;line-height:29px;background:#f0f8fc;color:#474747">5.86</div>
<div class="c" style="left:719px;top:471px;width:60px;height:27px;line-height:29px;background:#f0f8fc;color:#474747">1.26</div>
<div class="c" style="left:780px;top:471px;width:36px;height:27px;line-height:29px;background:#fff;color:#ff0000">胜</div>
<div class="c" style="left:817px;top:471px;width:36px;height:27px;line-height:29px;background:#fff;color:#ff0000">赢</div>
<div class="c" style="left:854px;top:471px;width:55px;height:27px;line-height:29px;background:#fff;color:#ff0000">大</div>
<div class="c" style="left:1px;top:499px;width:69px;height:27px;line-height:27px;background:#ff3333;color:#fff">英超</div>
<div class="c" style="left:71px;top:499px;width:72px;height:27px;line-height:29px;background:#f0f0f0;color:#474747">25-09-20</div>
<div class="c" style="left:144px;top:499px;width:83px;height:27px;line-height:29px;background:#f0f0f0"><span style="color:#007000">布莱顿</span></div>
<div class="c" style="left:228px;top:499px;width:83px;height:27px;line-height:29px;background:#f0f0f0"><span style="color:#ff0000">2-2</span><span style="color:#474747">(2-1)</span></div>
<div class="c" style="left:312px;top:499px;width:37px;height:27px;line-height:29px;background:#f0f0f0;color:#474747">2-10</div>
<div class="c" style="left:350px;top:499px;width:102px;height:27px;line-height:29px;background:#f0f0f0"><span style="color:#000">托特纳姆热刺</span></div>
<div class="c" style="left:453px;top:499px;width:37px;height:27px;line-height:29px;background:#fff9f5;color:#474747">0.86</div>
<div class="c" style="left:491px;top:499px;width:69px;height:27px;line-height:29px;background:#fff9f5;color:#111">平/半</div>
<div class="c" style="left:561px;top:499px;width:37px;height:27px;line-height:29px;background:#fff9f5;color:#474747">1.02</div>
<div class="c" style="left:599px;top:499px;width:58px;height:27px;line-height:29px;background:#f0f8fc;color:#474747">2.22</div>
<div class="c" style="left:658px;top:499px;width:60px;height:27px;line-height:29px;background:#f0f8fc;color:#474747">3.63</div>
<div class="c" style="left:719px;top:499px;width:60px;height:27px;line-height:29px;background:#f0f8fc;color:#474747">3.05</div>
<div class="c" style="left:780px;top:499px;width:36px;height:27px;line-height:29px;background:#f0f0f0;color:#0000ff">平</div>
<div class="c" style="left:817px;top:499px;width:36px;height:27px;line-height:29px;background:#f0f0f0;color:#007000">输</div>
<div class="c" style="left:854px;top:499px;width:55px;height:27px;line-height:29px;background:#f0f0f0;color:#ff0000">大</div>
<div class="c" style="left:1px;top:527px;width:69px;height:27px;line-height:27px;background:#ff3333;color:#fff">英超</div>
<div class="c" style="left:71px;top:527px;width:72px;height:27px;line-height:29px;background:#fff;color:#474747">25-09-13</div>
<div class="c" style="left:144px;top:527px;width:83px;height:27px;line-height:29px;background:#fff"><span style="color:#000">伯恩茅斯</span></div>
<div class="c" style="left:228px;top:527px;width:83px;height:27px;line-height:29px;background:#fff"><span style="color:#ff0000">2-1</span><span style="color:#474747">(1-0)</span></div>
<div class="c" style="left:312px;top:527px;width:37px;height:27px;line-height:29px;background:#fff;color:#474747">4-4</div>
<div class="c" style="left:350px;top:527px;width:102px;height:27px;line-height:29px;background:#fff"><span style="color:#007000">布莱顿</span></div>
<div class="c" style="left:453px;top:527px;width:37px;height:27px;line-height:29px;background:#fff9f5;color:#474747">0.80</div>
<div class="c" style="left:491px;top:527px;width:69px;height:27px;line-height:29px;background:#fff9f5;color:#111">平手</div>
<div class="c" style="left:561px;top:527px;width:37px;height:27px;line-height:29px;background:#fff9f5;color:#474747">1.09</div>
<div class="c" style="left:599px;top:527px;width:58px;height:27px;line-height:29px;background:#f0f8fc;color:#474747">2.40</div>
<div class="c" style="left:658px;top:527px;width:60px;height:27px;line-height:29px;background:#f0f8fc;color:#474747">3.52</div>
<div class="c" style="left:719px;top:527px;width:60px;height:27px;line-height:29px;background:#f0f8fc;color:#474747">2.82</div>
<div class="c" style="left:780px;top:527px;width:36px;height:27px;line-height:29px;background:#fff;color:#007000">负</div>
<div class="c" style="left:817px;top:527px;width:36px;height:27px;line-height:29px;background:#fff;color:#007000">输</div>
<div class="c" style="left:854px;top:527px;width:55px;height:27px;line-height:29px;background:#fff;color:#0000ff">走</div>
<div class="c" style="left:1px;top:555px;width:69px;height:27px;line-height:27px;background:#ff3333;color:#fff">英超</div>
<div class="c" style="left:71px;top:555px;width:72px;height:27px;line-height:29px;background:#f0f0f0;color:#474747">25-08-31</div>
<div class="c" style="left:144px;top:555px;width:83px;height:27px;line-height:29px;background:#f0f0f0"><span style="color:#007000">布莱顿</span></div>
<div class="c" style="left:228px;top:555px;width:83px;height:27px;line-height:29px;background:#f0f0f0"><span style="color:#ff0000">2-1</span><span style="color:#474747">(0-1)</span></div>
<div class="c" style="left:312px;top:555px;width:37px;height:27px;line-height:29px;background:#f0f0f0;color:#474747">3-2</div>
<div class="c" style="left:350px;top:555px;width:102px;height:27px;line-height:29px;background:#f0f0f0"><span style="color:#000">曼彻斯特城</span></div>
<div class="c" style="left:453px;top:555px;width:37px;height:27px;line-height:29px;background:#fff9f5;color:#474747">0.82</div>
<div class="c" style="left:491px;top:555px;width:69px;height:27px;line-height:29px;background:#fff9f5;color:#111"><span style="color:#ff0000">*</span>半球</div>
<div class="c" style="left:561px;top:555px;width:37px;height:27px;line-height:29px;background:#fff9f5;color:#474747">1.07</div>
<div class="c" style="left:599px;top:555px;width:58px;height:27px;line-height:29px;background:#f0f8fc;color:#474747">3.59</div>
<div class="c" style="left:658px;top:555px;width:60px;height:27px;line-height:29px;background:#f0f8fc;color:#474747">3.68</div>
<div class="c" style="left:719px;top:555px;width:60px;height:27px;line-height:29px;background:#f0f8fc;color:#474747">2.00</div>
<div class="c" style="left:780px;top:555px;width:36px;height:27px;line-height:29px;background:#f0f0f0;color:#ff0000">胜</div>
<div class="c" style="left:817px;top:555px;width:36px;height:27px;line-height:29px;background:#f0f0f0;color:#ff0000">赢</div>
<div class="c" style="left:854px;top:555px;width:55px;height:27px;line-height:29px;background:#f0f0f0;color:#0000ff">走</div>
<div class="c" style="left:1px;top:583px;width:69px;height:27px;line-height:27px;background:#808080;color:#fff">英联杯</div>
<div class="c" style="left:71px;top:583px;width:72px;height:27px;line-height:29px;background:#fff;color:#474747">25-08-28</div>
<div class="c" style="left:144px;top:583px;width:83px;height:27px;line-height:29px;background:#fff"><span style="color:#000">牛津联队</span></div>
<div class="c" style="left:228px;top:583px;width:83px;height:27px;line-height:29px;background:#fff"><span style="color:#ff0000">0-6</span><span style="color:#474747">(0-2)</span></div>
<div class="c" style="left:312px;top:583px;width:37px;height:27px;line-height:29px;background:#fff;color:#474747">7-5</div>
<div class="c" style="left:350px;top:583px;width:102px;height:27px;line-height:29px;background:#fff"><span style="color:#007000">布莱顿</span></div>
<div class="c" style="left:453px;top:583px;width:37px;height:27px;line-height:29px;background:#fff9f5;color:#474747">1.00</div>
<div class="c" style="left:491px;top:583px;width:69px;height:27px;line-height:29px;background:#fff9f5;color:#111"><span style="color:#ff0000">*</span>一/球半</div>
<div class="c" style="left:561px;top:583px;width:37px;height:27px;line-height:29px;background:#fff9f5;color:#474747">0.82</div>
<div class="c" style="left:599px;top:583px;width:58px;height:27px;line-height:29px;background:#f0f8fc;color:#474747">7.49</div>
<div class="c" style="left:658px;top:583px;width:60px;height:27px;line-height:29px;background:#f0f8fc;color:#474747">5.00</div>
<div class="c" style="left:719px;top:583px;width:60px;height:27px;line-height:29px;background:#f0f8fc;color:#474747">1.36</div>
<div class="c" style="left:780px;top:583px;width:36px;height:27px;line-height:29px;background:#fff;color:#ff0000">胜</div>
<div class="c" style="left:817px;top:583px;width:36px;height:27px;line-height:29px;background:#fff;color:#ff0000">赢</div>
<div class="c" style="left:854px;top:583px;width:55px;height:27px;line-height:29px;background:#fff;color:#ff0000">大</div>
<div class="c" style="left:1px;top:611px;width:69px;height:27px;line-height:27px;background:#ff3333;color:#fff">英超</div>
<div class="c" style="left:71px;top:611px;width:72px;height:27px;line-height:29px;background:#f0f0f0;color:#474747">25-08-24</div>
<div class="c" style="left:144px;top:611px;width:83px;height:27px;line-height:29px;background:#f0f0f0"><span style="color:#000">埃弗顿</span></div>
<div class="c" style="left:228px;top:611px;width:83px;height:27px;line-height:29px;background:#f0f0f0"><span style="color:#ff0000">2-0</span><span style="color:#474747">(1-0)</span></div>
<div class="c" style="left:312px;top:611px;width:37px;height:27px;line-height:29px;background:#f0f0f0;color:#474747">2-2</div>
<div class="c" style="left:350px;top:611px;width:102px;height:27px;line-height:29px;background:#f0f0f0"><span style="color:#007000">布莱顿</span></div>
<div class="c" style="left:453px;top:611px;width:37px;height:27px;line-height:29px;background:#fff9f5;color:#474747">0.80</div>
<div class="c" style="left:491px;top:611px;width:69px;height:27px;line-height:29px;background:#fff9f5;color:#111"><span style="color:#ff0000">*</span>平/半</div>
<div class="c" style="left:561px;top:611px;width:37px;height:27px;line-height:29px;background:#fff9f5;color:#474747">1.09</div>
<div class="c" style="left:599px;top:611px;width:58px;height:27px;line-height:29px;background:#f0f8fc;color:#474747">2.93</div>
<div class="c" style="left:658px;top:611px;width:60px;height:27px;line-height:29px;background:#f0f8fc;color:#474747">3.36</div>
<div class="c" style="left:719px;top:611px;width:60px;height:27px;line-height:29px;background:#f0f8fc;color:#474747">2.42</div>
<div class="c" style="left:780px;top:611px;width:36px;height:27px;line-height:29px;background:#f0f0f0;color:#007000">负</div>
<div class="c" style="left:817px;top:611px;width:36px;height:27px;line-height:29px;background:#f0f0f0;color:#007000">输</div>
<div class="c" style="left:854px;top:611px;width:55px;height:27px;line-height:29px;background:#f0f0f0;color:#007000">小</div>
<div class="c" style="left:1px;top:639px;width:69px;height:27px;line-height:27px;background:#ff3333;color:#fff">英超</div>
<div class="c" style="left:71px;top:639px;width:72px;height:27px;line-height:29px;background:#fff;color:#474747">25-08-16</div>
<div class="c" style="left:144px;top:639px;width:83px;height:27px;line-height:29px;background:#fff"><span style="color:#007000">布莱顿</span></div>
<div class="c" style="left:228px;top:639px;width:83px;height:27px;line-height:29px;background:#fff"><span style="color:#ff0000">1-1</span><span style="color:#474747">(0-0)</span></div>
<div class="c" style="left:312px;top:639px;width:37px;height:27px;line-height:29px;background:#fff;color:#474747">4-3</div>
<div class="c" style="left:350px;top:639px;width:102px;height:27px;line-height:29px;background:#fff"><span style="color:#000">富勒姆</span></div>
<div class="c" style="left:453px;top:639px;width:37px;height:27px;line-height:29px;background:#fff9f5;color:#474747">0.84</div>
<div class="c" style="left:491px;top:639px;width:69px;height:27px;line-height:29px;background:#fff9f5;color:#111">半球</div>
<div class="c" style="left:561px;top:639px;width:37px;height:27px;line-height:29px;background:#fff9f5;color:#474747">1.05</div>
<div class="c" style="left:599px;top:639px;width:58px;height:27px;line-height:29px;background:#f0f8fc;color:#474747">1.87</div>
<div class="c" style="left:658px;top:639px;width:60px;height:27px;line-height:29px;background:#f0f8fc;color:#474747">3.67</div>
<div class="c" style="left:719px;top:639px;width:60px;height:27px;line-height:29px;background:#f0f8fc;color:#474747">4.06</div>
<div class="c" style="left:780px;top:639px;width:36px;height:27px;line-height:29px;background:#fff;color:#0000ff">平</div>
<div class="c" style="left:817px;top:639px;width:36px;height:27px;line-height:29px;background:#fff;color:#007000">输</div>
<div class="c" style="left:854px;top:639px;width:55px;height:27px;line-height:29px;background:#fff;color:#007000">小</div>
<div class="c" style="left:1px;top:667px;width:69px;height:27px;line-height:27px;background:#00a9a9;color:#fff">球会友谊</div>
<div class="c" style="left:71px;top:667px;width:72px;height:27px;line-height:29px;background:#f0f0f0;color:#474747">25-08-10</div>
<div class="c" style="left:144px;top:667px;width:83px;height:27px;line-height:29px;background:#f0f0f0"><span style="color:#007000">布莱顿(中)</span></div>
<div class="c" style="left:228px;top:667px;width:83px;height:27px;line-height:29px;background:#f0f0f0"><span style="color:#ff0000">2-1</span><span style="color:#474747">(1-0)</span></div>
<div class="c" style="left:312px;top:667px;width:37px;height:27px;line-height:29px;background:#f0f0f0;color:#474747">4-1</div>
<div class="c" style="left:350px;top:667px;width:102px;height:27px;line-height:29px;background:#f0f0f0"><span style="color:#000">沃尔夫斯堡</span></div>
<div class="c" style="left:453px;top:667px;width:37px;height:27px;line-height:29px;background:#fff9f5;color:#474747">0.75</div>
<div class="c" style="left:491px;top:667px;width:69px;height:27px;line-height:29px;background:#fff9f5;color:#111">半/一</div>
<div class="c" style="left:561px;top:667px;width:37px;height:27px;line-height:29px;background:#fff9f5;color:#474747">1.07</div>
<div class="c" style="left:599px;top:667px;width:58px;height:27px;line-height:29px;background:#f0f8fc;color:#474747">1.68</div>
<div class="c" style="left:658px;top:667px;width:60px;height:27px;line-height:29px;background:#f0f8fc;color:#474747">3.97</div>
<div class="c" style="left:719px;top:667px;width:60px;height:27px;line-height:29px;background:#f0f8fc;color:#474747">4.32</div>
<div class="c" style="left:780px;top:667px;width:36px;height:27px;line-height:29px;background:#f0f0f0;color:#ff0000">胜</div>
<div class="c" style="left:817px;top:667px;width:36px;height:27px;line-height:29px;background:#f0f0f0;color:#ff0000">赢</div>
<div class="c" style="left:854px;top:667px;width:55px;height:27px;line-height:29px;background:#f0f0f0;color:#0000ff">走</div>
<div class="c" style="left:1px;top:695px;width:69px;height:27px;line-height:27px;background:#00a9a9;color:#fff">球会友谊</div>
<div class="c" style="left:71px;top:695px;width:72px;height:27px;line-height:29px;background:#fff;color:#474747">25-08-09</div>
<div class="c" style="left:144px;top:695px;width:83px;height:27px;line-height:29px;background:#fff"><span style="color:#007000">布莱顿</span></div>
<div class="c" style="left:228px;top:695px;width:83px;height:27px;line-height:29px;background:#fff"><span style="color:#ff0000">2-1</span><span style="color:#474747">(1-0)</span></div>
<div class="c" style="left:312px;top:695px;width:37px;height:27px;line-height:29px;background:#fff;color:#474747">0-0</div>
<div class="c" style="left:350px;top:695px;width:102px;height:27px;line-height:29px;background:#fff"><span style="color:#000">沃尔夫斯堡</span></div>
<div class="c" style="left:453px;top:695px;width:37px;height:27px;line-height:29px;background:#fff9f5;color:#474747">0.82</div>
<div class="c" style="left:491px;top:695px;width:69px;height:27px;line-height:29px;background:#fff9f5;color:#111">半球</div>
<div class="c" style="left:561px;top:695px;width:37px;height:27px;line-height:29px;background:#fff9f5;color:#474747">1.00</div>
<div class="c" style="left:599px;top:695px;width:58px;height:27px;line-height:29px;background:#f0f8fc;color:#474747">1.80</div>
<div class="c" style="left:658px;top:695px;width:60px;height:27px;line-height:29px;background:#f0f8fc;color:#474747">3.72</div>
<div class="c" style="left:719px;top:695px;width:60px;height:27px;line-height:29px;background:#f0f8fc;color:#474747">3.37</div>
<div class="c" style="left:780px;top:695px;width:36px;height:27px;line-height:29px;background:#fff;color:#ff0000">胜</div>
<div class="c" style="left:817px;top:695px;width:36px;height:27px;line-height:29px;background:#fff;color:#ff0000">赢</div>
<div class="c" style="left:854px;top:695px;width:55px;height:27px;line-height:29px;background:#fff;color:#0000ff">走</div>
<div class="c" style="left:1px;top:723px;width:69px;height:27px;line-height:27px;background:#00a9a9;color:#fff">球会友谊</div>
<div class="c" style="left:71px;top:723px;width:72px;height:27px;line-height:29px;background:#f0f0f0;color:#474747">25-08-02</div>
<div class="c" style="left:144px;top:723px;width:83px;height:27px;line-height:29px;background:#f0f0f0"><span style="color:#000">南安普敦</span></div>
<div class="c" style="left:228px;top:723px;width:83px;height:27px;line-height:29px;background:#f0f0f0"><span style="color:#ff0000">2-2</span><span style="color:#474747">(0-1)</span></div>
<div class="c" style="left:312px;top:723px;width:37px;height:27px;line-height:29px;background:#f0f0f0;color:#474747">5-8</div>
<div class="c" style="left:350px;top:723px;width:102px;height:27px;line-height:29px;background:#f0f0f0"><span style="color:#007000">布莱顿</span></div>
<div class="c" style="left:453px;top:723px;width:37px;height:27px;line-height:29px;background:#fff9f5;color:#474747">1.05</div>
<div class="c" style="left:491px;top:723px;width:69px;height:27px;line-height:29px;background:#fff9f5;color:#111"><span style="color:#ff0000">*</span>半/一</div>
<div class="c" style="left:561px;top:723px;width:37px;height:27px;line-height:29px;background:#fff9f5;color:#474747">0.76</div>
<div class="c" style="left:599px;top:723px;width:58px;height:27px;line-height:29px;background:#f0f8fc;color:#474747">4.05</div>
<div class="c" style="left:658px;top:723px;width:60px;height:27px;line-height:29px;background:#f0f8fc;color:#474747">4.00</div>
<div class="c" style="left:719px;top:723px;width:60px;height:27px;line-height:29px;background:#f0f8fc;color:#474747">1.70</div>
<div class="c" style="left:780px;top:723px;width:36px;height:27px;line-height:29px;background:#f0f0f0;color:#0000ff">平</div>
<div class="c" style="left:817px;top:723px;width:36px;height:27px;line-height:29px;background:#f0f0f0;color:#007000">输</div>
<div class="c" style="left:854px;top:723px;width:55px;height:27px;line-height:29px;background:#f0f0f0;color:#ff0000">大</div></body></html>
